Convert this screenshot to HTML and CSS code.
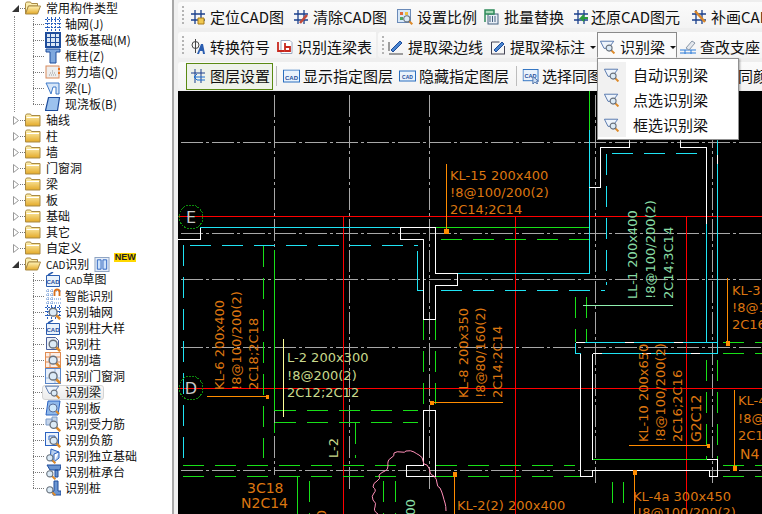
FILE: index.html
```html
<!DOCTYPE html>
<html lang="zh">
<head>
<meta charset="utf-8">
<title>CAD识别</title>
<link rel="stylesheet" href="styles.css">
</head>
<body>
<svg class="defs" width="0" height="0" aria-hidden="true">
  <defs>
    <linearGradient id="fold" x1="0" y1="0" x2="0" y2="1"><stop offset="0" stop-color="#fff4b8"/><stop offset="1" stop-color="#e3a928"/></linearGradient>
    <symbol id="folder" viewBox="0 0 16 14"><path d="M.5 2.500 1.500 1h4l1 1.500h8.500v10.500h-14.500z" fill="url(#fold)" stroke="#a98a44"/><path d="M1.500 4.500h12.500" stroke="#fff" fill="none"/></symbol>
    <symbol id="folder-open" viewBox="0 0 16 14"><path d="M.5 2.500 1.500 1h4l1 1.500h6v2.500h-9l-3 8z" fill="#fbeeb0" stroke="#a98a44"/><path d="M3.500 5h12l-3 8h-12z" fill="url(#fold)" stroke="#a98a44"/></symbol>
    <symbol id="mag" viewBox="0 0 16 16"><path d="M10 10 15 15" stroke="#dd8a2a" stroke-width="3"/><circle cx="7" cy="7" r="4.500" fill="#dcebf7" stroke="#68717c" stroke-width="1.600"/></symbol>
    <symbol id="hash" viewBox="0 0 16 16"><path d="M5 1v14M11 1v14M1 5h14M1 11h14" stroke="#1a3f8c" stroke-width="1.300" fill="none"/></symbol>
    <symbol id="grid" viewBox="0 0 16 16"><path d="M2.500 1v14M6.500 1v14M10.500 1v14M14.500 1v14M0 3.500h16M0 7.500h16M0 11.500h16" stroke="#2b62c0" stroke-dasharray="2 1" fill="none"/></symbol>
    <symbol id="cad" viewBox="0 0 16 16"><path d="M1.500 3.500h13v11h-13z" fill="#e9f2fb" stroke="#2a5db0"/><path d="M3 3 8 0" stroke="#2a5db0" stroke-width="1.500"/><text x="8" y="12" text-anchor="middle" class="cadtxt">CAD</text></symbol>
    <symbol id="beam" viewBox="0 0 18 18"><path d="M.5 2.500h15l-6 8-5 0z" fill="#eef4fb" stroke="#4a6ea8"/><use href="#mag" x="5" y="5" width="12" height="12"/></symbol>
    <symbol id="cadbox" viewBox="0 0 18 14"><rect x=".5" y=".5" width="16" height="12" fill="#eaf3fc" stroke="#2a6fc0"/><text x="8.500" y="10" text-anchor="middle" class="cadtxt">CAD</text></symbol>
  </defs>
</svg>

<div class="app">
  <aside class="sidebar">
    <div class="row"><svg class="exp" viewBox="0 0 9 9"><path d="M8 1v7H1z" fill="#333"/></svg><span class="hdash"></span><svg class="fold"><use href="#folder-open"/></svg><span class="t0">常用构件类型</span></div>
    <div class="kids">
      <div class="row"><span class="conn"></span><svg class="ic"><use href="#grid"/></svg><span class="t1">轴网(J)</span></div>
      <div class="row"><span class="conn"></span><svg class="ic" viewBox="0 0 16 16"><rect x="1" y="1" width="14" height="14" fill="#dbe7f6" stroke="#1f4d9c" stroke-width="2"/><path d="M1 5.500h14M1 10.500h14M5.500 1v14M10.500 1v14" stroke="#1f4d9c"/></svg><span class="t1">筏板基础(M)</span></div>
      <div class="row"><span class="conn"></span><svg class="ic" viewBox="0 0 16 16"><path d="M1 1h14v3h-4v11H5V4H1z" fill="#7fa8de" stroke="#1f4d9c"/></svg><span class="t1">框柱(Z)</span></div>
      <div class="row"><span class="conn"></span><svg class="ic" viewBox="0 0 16 16"><rect x="1" y="2" width="13" height="12" fill="#eee" stroke="#d98a5a"/><path d="M4 11h7M5 9h5M7 7h2" stroke="#999" stroke-dasharray="1 1"/><path d="M14 4v8" stroke="#e8701c" stroke-dasharray="2 2" stroke-width="2"/></svg><span class="t1">剪力墙(Q)</span></div>
      <div class="row"><span class="conn"></span><svg class="ic" viewBox="0 0 16 16"><path d="M1 3h13v11h-3V7H8l-2 7-4-9z" fill="#d6e6f8" stroke="#3d78c8"/></svg><span class="t1">梁(L)</span></div>
      <div class="row"><span class="conn last"></span><svg class="ic" viewBox="0 0 16 16"><path d="M3.500 1.500h11l-2 13h-12z" fill="#9cc2ee" stroke="#1f4d9c" stroke-width="1.200"/></svg><span class="t1">现浇板(B)</span></div>
    </div>
    <div class="row"><svg class="exp" viewBox="0 0 9 9"><path d="M2.500 .5 7.500 4.500 2.500 8.500z" fill="#fff" stroke="#999"/></svg><span class="hdash"></span><svg class="fold"><use href="#folder"/></svg><span class="t0">轴线</span></div>
    <div class="row"><svg class="exp" viewBox="0 0 9 9"><path d="M2.500 .5 7.500 4.500 2.500 8.500z" fill="#fff" stroke="#999"/></svg><span class="hdash"></span><svg class="fold"><use href="#folder"/></svg><span class="t0">柱</span></div>
    <div class="row"><svg class="exp" viewBox="0 0 9 9"><path d="M2.500 .5 7.500 4.500 2.500 8.500z" fill="#fff" stroke="#999"/></svg><span class="hdash"></span><svg class="fold"><use href="#folder"/></svg><span class="t0">墙</span></div>
    <div class="row"><svg class="exp" viewBox="0 0 9 9"><path d="M2.500 .5 7.500 4.500 2.500 8.500z" fill="#fff" stroke="#999"/></svg><span class="hdash"></span><svg class="fold"><use href="#folder"/></svg><span class="t0">门窗洞</span></div>
    <div class="row"><svg class="exp" viewBox="0 0 9 9"><path d="M2.500 .5 7.500 4.500 2.500 8.500z" fill="#fff" stroke="#999"/></svg><span class="hdash"></span><svg class="fold"><use href="#folder"/></svg><span class="t0">梁</span></div>
    <div class="row"><svg class="exp" viewBox="0 0 9 9"><path d="M2.500 .5 7.500 4.500 2.500 8.500z" fill="#fff" stroke="#999"/></svg><span class="hdash"></span><svg class="fold"><use href="#folder"/></svg><span class="t0">板</span></div>
    <div class="row"><svg class="exp" viewBox="0 0 9 9"><path d="M2.500 .5 7.500 4.500 2.500 8.500z" fill="#fff" stroke="#999"/></svg><span class="hdash"></span><svg class="fold"><use href="#folder"/></svg><span class="t0">基础</span></div>
    <div class="row"><svg class="exp" viewBox="0 0 9 9"><path d="M2.500 .5 7.500 4.500 2.500 8.500z" fill="#fff" stroke="#999"/></svg><span class="hdash"></span><svg class="fold"><use href="#folder"/></svg><span class="t0">其它</span></div>
    <div class="row"><svg class="exp" viewBox="0 0 9 9"><path d="M2.500 .5 7.500 4.500 2.500 8.500z" fill="#fff" stroke="#999"/></svg><span class="hdash"></span><svg class="fold"><use href="#folder"/></svg><span class="t0">自定义</span></div>
    <div class="row"><svg class="exp" viewBox="0 0 9 9"><path d="M8 1v7H1z" fill="#333"/></svg><span class="hdash"></span><svg class="fold"><use href="#folder-open"/></svg><span class="t0"><span class="lat">CAD</span>识别</span>
      <svg class="badge-ic" viewBox="0 0 16 16"><rect x=".5" y=".5" width="15" height="15" fill="#e6eef9" stroke="#8aa0c0"/><path d="M3 3h4v10H3zM9 3h4v10H9z" fill="#cfe3fa" stroke="#2b62c0"/></svg><span class="new">NEW</span></div>
    <div class="kids plain">
      <div class="row"><span class="conn"></span><svg class="ic"><use href="#cad"/></svg><span class="t1"><span class="lat tiny">CAD</span>草图</span></div>
      <div class="row"><span class="conn"></span><svg class="ic" viewBox="0 0 16 16"><path d="M1 3h16M1 7h7M1 11h16M1 15h16M3 1v15M7 1v15" stroke="#5a8ad0" stroke-dasharray="1 1" fill="none"/><path d="M9.500 8V4a2.500 2.500 0 0 1 5 0v4" stroke="#d8701c" stroke-width="1.800" fill="none"/></svg><span class="t1">智能识别</span></div>
      <div class="row"><span class="conn"></span><svg class="ic" viewBox="0 0 16 16"><use href="#grid" width="16" height="16"/><use href="#mag" x="2" y="2" width="14" height="14"/></svg><span class="t1">识别轴网</span></div>
      <div class="row"><span class="conn"></span><svg class="ic"><use href="#cad"/></svg><span class="t1">识别柱大样</span></div>
      <div class="row"><span class="conn"></span><svg class="ic" viewBox="0 0 16 16"><path d="M1.500 1.500h9l3 3v9h-12z" fill="#e9eff8" stroke="#4a5f9a"/><use href="#mag" x="2" y="2" width="14" height="14"/></svg><span class="t1">识别柱</span></div>
      <div class="row"><span class="conn"></span><svg class="ic" viewBox="0 0 16 16"><rect x=".5" y=".5" width="15" height="15" fill="#fbeee6" stroke="#e08a50"/><path d="M1 5h14M1 10h14M5 1v14" stroke="#e08a50"/><use href="#mag" x="2" y="2" width="14" height="14"/></svg><span class="t1">识别墙</span></div>
      <div class="row"><span class="conn"></span><svg class="ic" viewBox="0 0 16 16"><rect x=".5" y=".5" width="15" height="15" fill="#e8f0fb" stroke="#5a86c8"/><path d="M10 1v14M1 10h14" stroke="#9ab8e0"/><use href="#mag" x="2" y="2" width="14" height="14"/></svg><span class="t1">识别门窗洞</span></div>
      <div class="row"><span class="conn"></span><span class="hot"><svg class="ic"><use href="#beam"/></svg><span class="t1">识别梁</span></span></div>
      <div class="row"><span class="conn"></span><svg class="ic" viewBox="0 0 16 16"><path d="M3 1h12l-2 14H1z" fill="#8fb8ea" stroke="#2b62c0"/><circle cx="8" cy="8" r="4" fill="#cfe8fb" stroke="#5a6f9a"/><path d="M11 11l3 3" stroke="#dd8a2a" stroke-width="2"/></svg><span class="t1">识别板</span></div>
      <div class="row"><span class="conn"></span><svg class="ic" viewBox="0 0 16 16"><path d="M1 3h6v6H1zM7 1h5v6H7z" fill="#c4d4ea" stroke="#7a9ac8"/><use href="#mag" x="3" y="3" width="13" height="13"/></svg><span class="t1">识别受力筋</span></div>
      <div class="row"><span class="conn"></span><svg class="ic" viewBox="0 0 16 16"><rect x=".5" y=".5" width="13" height="13" fill="#eaf2fc" stroke="#2b62c0"/><path d="M4 8V4h6v4" stroke="#2b62c0" fill="none"/><use href="#mag" x="3" y="3" width="13" height="13"/></svg><span class="t1">识别负筋</span></div>
      <div class="row"><span class="conn"></span><svg class="ic" viewBox="0 0 16 16"><path d="M6 1l8 3v6l-5 4-4-2zM14 4 9 6v8" fill="#b8cfee" stroke="#2b62c0"/><use href="#mag" x="0" y="5" width="11" height="11"/></svg><span class="t1">识别独立基础</span></div>
      <div class="row"><span class="conn"></span><svg class="ic" viewBox="0 0 16 16"><path d="M2 1h14l-1 5H5zM10 6h3v7h-3z" fill="#6a94d0" stroke="#1f4d9c"/><use href="#mag" x="0" y="5" width="11" height="11"/></svg><span class="t1">识别桩承台</span></div>
      <div class="row"><span class="conn last"></span><svg class="ic" viewBox="0 0 16 16"><path d="M9 1h4v10h3v4H8v-4h1z" fill="#6a94d0" stroke="#1f4d9c"/><use href="#mag" x="0" y="5" width="11" height="11"/></svg><span class="t1">识别桩</span></div>
    </div>
  </aside>

  <main class="main">
    <div class="bands">
      <div class="band-row r1">
        <div class="band grow">
          <span class="grip"></span>
          <span class="tool w103"><svg class="ti" viewBox="0 0 16 16"><use href="#hash" width="16" height="16"/><path d="M8 15V9h6v6z" fill="#f0c850" stroke="#a87a18"/></svg>定位CAD图</span>
          <span class="tool w104"><svg class="ti" viewBox="0 0 16 16"><use href="#hash" width="16" height="16"/><path d="M7 14 14 6" stroke="#c24a3a" stroke-width="2.500"/></svg>清除CAD图</span>
          <span class="tool w87"><svg class="ti" viewBox="0 0 16 16"><rect x=".5" y=".5" width="13" height="13" fill="#d8e8f8" stroke="#6a8ab8"/><rect x="3" y="3" width="3" height="3" fill="#e06a3a"/><rect x="8" y="3" width="3" height="3" fill="#f0c040"/><rect x="3" y="8" width="3" height="3" fill="#50a860"/><use href="#mag" x="5" y="5" width="11" height="11"/></svg>设置比例</span>
          <span class="tool w89"><svg class="ti" viewBox="0 0 16 16"><rect x="4" y="5" width="10" height="10" fill="#e8eef6" stroke="#44607e"/><path d="M6 7v6M8.500 7v6M11 7v6" stroke="#44607e"/><path d="M1 1h9v4H1zM1 1v12" stroke="#2e8a5a" stroke-width="1.500" fill="#a8d8b8"/></svg>批量替换</span>
          <span class="tool w118 snug"><svg class="ti" viewBox="0 0 16 16"><use href="#hash" width="16" height="16"/><path d="M15 9H8l3-3M8 9l3 3" stroke="#2a9a3a" stroke-width="1.800" fill="none"/></svg>还原CAD图元</span>
          <span class="tool"><svg class="ti" viewBox="0 0 16 16"><use href="#hash" width="16" height="16"/><path d="M4 2 14 13" stroke="#d8862a" stroke-width="2.500"/></svg>补画CAD图元</span>
        </div>
      </div>
      <div class="band-row r2">
        <div class="band first">
          <span class="grip"></span>
          <span class="tool w87"><svg class="ti" viewBox="0 0 16 16"><circle cx="5.500" cy="6" r="3.500" fill="none" stroke="#444"/><path d="M5.500 0v14" stroke="#444"/><path d="M7 15 11 5h2l2 10h-2l-.5-3h-2.500l-1 3z" fill="#2a5db0"/></svg>转换符号</span>
          <span class="tool"><svg class="ti" viewBox="0 0 16 16"><path d="M4 1.500h9l2 2v11H4z" fill="#fff" stroke="#9aa8c0"/><path d="M1 3v9h6M8 4v8h5V8H8" stroke="#c8281e" stroke-width="1.800" fill="none"/></svg>识别连梁表</span>
        </div>
        <div class="band grow">
          <span class="grip second"></span>
          <span class="tool w102"><svg class="ti" viewBox="0 0 16 16"><path d="M1 15h14M1 12V3" stroke="#444" fill="none"/><path d="M3 11 12 2l2 2-9 9z" fill="#4a86d0" stroke="#1f4d9c"/></svg>提取梁边线</span>
          <span class="tool w107"><svg class="ti" viewBox="0 0 16 16"><path d="M1 15h14M1.500 15V3h8M14.500 7v8" stroke="#445" fill="none"/><path d="M4 11 12 3l2 2-8 8z" fill="#4a86d0" stroke="#1f4d9c"/></svg>提取梁标注<span class="drop"></span></span>
          <span class="tool btn-on"><svg class="ti" viewBox="0 0 18 18"><use href="#beam" width="18" height="18"/></svg>识别梁<span class="drop"></span></span>
          <span class="tool"><svg class="ti" viewBox="0 0 16 16"><path d="M0 11h16M0 14h16M5 11v4M11 11v4" stroke="#2a7ad8" fill="none"/><path d="M6 9l6-7 3 2-6 7z" fill="#e4e8ee" stroke="#8a98a8"/></svg>查改支座</span>
        </div>
      </div>
      <div class="band-row r3">
        <div class="band grow">
          <span class="tool pressed"><svg class="ti" viewBox="0 0 16 16"><path d="M5 1v14M11 1v14M1 5h14" stroke="#1a3f8c" fill="none"/><path d="M15 9H4l3-3M4 9l3 3M15 12H7" stroke="#1a6fd0" fill="none"/></svg>图层设置</span>
          <span class="sep"></span>
          <span class="tool w116"><svg class="ti ww" viewBox="0 0 18 14"><use href="#cadbox" width="18" height="14"/></svg>显示指定图层</span>
          <span class="tool w117"><svg class="ti ww" viewBox="0 0 18 14"><rect x=".5" y="1.500" width="16" height="10" fill="#eaf3fc" stroke="#2a6fc0"/><text x="8.500" y="9" text-anchor="middle" class="cadtxt small">CAD</text></svg>隐藏指定图层</span>
          <span class="sep tail"></span>
          <span class="tool w166"><svg class="ti ww" viewBox="0 0 18 16"><use href="#cadbox" width="18" height="14"/><path d="M11 8v8l2-2 3 2-1-3h2z" fill="#cfe2f6" stroke="#4a6ea8"/></svg>选择同图层CAD图元</span>
          <span class="tool"><svg class="ti ww" viewBox="0 0 18 16"><use href="#cadbox" width="18" height="14"/></svg>选择同颜色CAD图元</span>
        </div>
      </div>
    </div>

    <div class="menu">
      <div class="mi"><span class="gut"><svg class="ti" viewBox="0 0 18 18"><use href="#beam" width="18" height="18"/></svg></span><span class="ml">自动识别梁</span></div>
      <div class="mi"><span class="gut"><svg class="ti" viewBox="0 0 18 18"><use href="#beam" width="18" height="18"/></svg></span><span class="ml">点选识别梁</span></div>
      <div class="mi"><span class="gut"><svg class="ti" viewBox="0 0 18 18"><use href="#beam" width="18" height="18"/></svg></span><span class="ml">框选识别梁</span></div>
    </div>

    <svg class="draw" viewBox="178 91 584 423" width="584" height="423">
      <path class="gray" d="M181 142.500H762M181 233.500H762M181 279.500H762M181 347.500H762M181 470.500H762M274.500 95V475M349.500 95V490M429.500 95V490M595.500 95V483M712.500 95V483"/>
      <path class="red" d="M178 216.500H762M178 388.500H762M343.500 216.500V514M515.500 216.500V514M686.500 216.500V514"/>
      <path class="green" d="M589.500 91V130M435 227.500H589.500M274.500 250V410.500M274.500 422.500V433M297.500 477V514M592 459.500H707"/>
      <path class="green dash" d="M263.500 246V458M274.500 410.500H418M274.500 422.500H418M355.500 422.500V458M423.500 319V410M435.500 319V410M183 465.500H423M183 476.500H423M436 465.500H575M436 476.500H580M723 465.500H762M723 476.500H762M309.500 481V514M383.500 481V514M395.500 481V514M612.500 482V514M623.500 482V514M575.500 297V342M586.500 297V342M441 239.500H589M706.500 360V459M717.500 360V459M723 342.500H762M723 353.500H762"/>
      <path class="cyan" d="M200 227.500H400M589.500 130V273.500H458M417.500 251V290.500H423M575.500 342.500H717.500V353.500H592.500M575.500 342.500V353.500H581M706.500 224V342M717.500 140V342"/>
      <path class="cyan dash" d="M190 245.500H418M183.500 245V465M417.500 251V290M441 290.500H605M606.500 154V285M612 153.500H702"/>
      <path class="white" d="M178 239.500H200.500V227.500M400.500 227.500H435.500V273.500H457.500V285.500H435.500V319.500H423.500V239.500H400.500ZM423.500 410.500H435.500V476.500H406.500V465.500H423.500ZM629.500 139V147.500H600.500V187.500H589M680.500 139V147.500H706.500V224M580.500 353.500V476.500H592.500V470.500H709.500V476.500H717.500V459.500H707M592.500 353.500V459.500"/>
      <path class="white wd" d="M575.500 342.500H717.500M592.500 353.500H717.500M717.500 155V200"/>
      <path class="pink" d="M378 514q-5-3-3-7t-2-7q-2-4 1-7t-1-6q0-4 4-6t2-6q3-3 6-4t3-5q-1-6 3-8t3-5q3-2 7-1t5-1q5-1 8 1t5 3q4 2 4 6t4 4q3 4 3 7t4 4q3 3 3 7t3 5q2 4 3 8t2 7q1 3 1 8"/>
      <path class="orange" d="M446.500 164V233M207 396.500H269M430 402.500H503M454.500 472V514M634.500 470V514M629 445.500H710M734.500 390V470M727.500 278V345"/>
      <path class="orange wide" d="M444.500 229h4v4h-4zM733 466h3v4h-3zM266 395h2v3h-2zM430 401h3v3h-3zM453 472h3v4h-3zM633 470h3v4h-3zM707 444h2v3h-2zM726 341h3v4h-3z"/>
      <path class="pale" d="M283.500 339V417"/>
      <path class="mint" d="M583 305.500H673"/>

      <circle class="ring" cx="191" cy="217" r="12"/>
      <circle class="ring" cx="191" cy="388" r="12"/>
      <text class="axis" x="191" y="223">E</text>
      <text class="axis" x="191" y="394">D</text>

      <text class="ot" x="450" y="180">KL-15 200x400</text>
      <text class="ot" x="450" y="197">!8@100/200(2)</text>
      <text class="ot" x="450" y="214">2C14;2C14</text>

      <text class="ot" transform="translate(224 390) rotate(-90)">KL-6 200x400</text>
      <text class="ot" transform="translate(241 390) rotate(-90)">!8@100/200(2)</text>
      <text class="ot" transform="translate(258 390) rotate(-90)">2C18;2C18</text>

      <text class="pt" x="287" y="362">L-2 200x300</text>
      <text class="pt" x="287" y="380">!8@200(2)</text>
      <text class="pt" x="287" y="397">2C12;2C12</text>
      <text class="pt" transform="translate(338 458) rotate(-90)">L-2</text>

      <text class="ot big" x="247" y="493">3C18</text>
      <text class="ot big" x="241" y="508">N2C14</text>

      <text class="ot" transform="translate(468 398) rotate(-90)">KL-8 200x350</text>
      <text class="ot" transform="translate(485 398) rotate(-90)">!8@80/160(2)</text>
      <text class="ot" transform="translate(502 398) rotate(-90)">2C14;2C14</text>

      <text class="ot" x="457" y="510">KL-2(2) 200x400</text>
      <text class="ot" x="633" y="501">KL-4a 300x450</text>
      <text class="ot" x="637" y="517">!8@100/200(2)</text>

      <text class="ot" transform="translate(648 442) rotate(-90)">KL-10 200x650</text>
      <text class="ot" transform="translate(665 442) rotate(-90)">!8@100/200(2)</text>
      <text class="ot" transform="translate(682 442) rotate(-90)">2C16;2C16</text>
      <text class="ot big" transform="translate(701 442) rotate(-90)">G2C12</text>

      <text class="ot" x="738" y="405">KL-4</text>
      <text class="ot" x="738" y="423">!8@</text>
      <text class="ot" x="738" y="440">2C1</text>
      <text class="ot big" x="740" y="459">N4</text>

      <text class="ot" x="732" y="295">KL-3</text>
      <text class="ot" x="732" y="312">!8@1</text>
      <text class="ot" x="732" y="329">2C16</text>

      <text class="mt" transform="translate(637 299) rotate(-90)">LL-1 200x400</text>
      <text class="mt" transform="translate(655 299) rotate(-90)">!8@100/200(2)</text>
      <text class="mt" transform="translate(673 299) rotate(-90)">2C14;3C14</text>
      <text class="mt endt" transform="translate(415 499) rotate(-90)">LL-2 200x400</text>
      <text class="ot endt" transform="translate(326 510) rotate(-90)">KL-7 200x400</text>
    </svg>
  </main>
</div>
</body>
</html>
```

FILE: styles.css
```css
* { box-sizing: border-box; }
html, body { margin: 0; padding: 0; }
body {
  width: 762px;
  height: 514px;
  overflow: hidden;
  background: #fff;
  font-family: "Noto Sans CJK SC", "Liberation Sans", sans-serif;
  color: #111;
}
.defs { position: absolute; }
.cadtxt { font: bold 6px "Liberation Sans", sans-serif; fill: #1f4d9c; }
.cadtxt.small { font-size: 5px; }

.app { display: flex; width: 762px; height: 514px; }

/* tree */
.sidebar {
  width: 178px;
  flex: none;
  padding-right: 4px;
  background: #fff;
  border-right: 4px solid #f0f0f0;
  box-shadow: inset -2px 0 0 #a8a8a8;
  overflow: hidden;
  font-size: 12px;
  line-height: 16px;
}
.row { display: flex; align-items: center; height: 16px; white-space: nowrap; }
.exp { width: 9px; height: 9px; margin-left: 11px; flex: none; }
.hdash {
  width: 5px;
  height: 1px;
  background: repeating-linear-gradient(90deg, #777 0 1px, transparent 1px 2px);
}
.fold { width: 16px; height: 14px; flex: none; }
.t0 { margin-left: 5px; }
.t1 { margin-left: 4px; }
.lat { font-size: 10px; }
.lat.tiny { font-size: 9px; }
.kids {
  margin-left: 14px;
  padding-left: 18px;
  border-left: 1px dotted #888;
}
.kids.plain { border-left-color: transparent; }
.conn {
  width: 12px;
  height: 16px;
  flex: none;
  background:
    repeating-linear-gradient(90deg, #777 0 1px, transparent 1px 2px) left center / 100% 1px no-repeat,
    repeating-linear-gradient(0deg, #777 0 1px, transparent 1px 2px) left top / 1px 100% no-repeat;
}
.conn.last {
  background:
    repeating-linear-gradient(90deg, #777 0 1px, transparent 1px 2px) left center / 100% 1px no-repeat,
    repeating-linear-gradient(0deg, #777 0 1px, transparent 1px 2px) left top / 1px 50% no-repeat;
}
.ic { width: 16px; height: 16px; flex: none; }
.badge-ic { width: 16px; height: 15px; margin-left: 5px; flex: none; }
.new {
  margin: -13px 0 0 4px;
  width: 22px;
  height: 9px;
  text-align: center;
  background: #ffd800;
  font: bold 9px/9px "Liberation Sans", sans-serif;
  color: #222;
}
.hot {
  display: flex;
  align-items: center;
  height: 15px;
  margin-left: -3px;
  padding: 0 2px;
  border: 1px solid #d4d4d4;
  border-radius: 3px;
  background: linear-gradient(#f8f8f8, #ececec);
  white-space: nowrap;
}

/* main */
.main { flex: 1; min-width: 0; display: flex; flex-direction: column; position: relative; }
.bands {
  flex: none;
  height: 91px;
  padding-top: 2px;
  background: #eeeeee;
  display: flex;
  flex-direction: column;
  gap: 4px;
  font-size: 15px;
  line-height: 18px;
}
.band-row { display: flex; gap: 2px; height: 26px; white-space: nowrap; overflow: hidden; flex: none; }
.band-row.r3 { height: 28px; }
.r1 .band, .r2 .band { padding-top: 4px; }
.band {
  display: flex;
  align-items: center;
  height: 100%;
  background: linear-gradient(#fbfbfb, #f3f3f3);
  border-radius: 3px 0 0 3px;
}
.band.grow { flex: 1; min-width: 0; overflow: hidden; }
.band.first { width: 198px; flex: none; }
.grip {
  width: 2px;
  height: 18px;
  margin: -4px 6px 0 4px;
  flex: none;
  background: repeating-linear-gradient(#b4b4b4 0 2px, transparent 2px 4px);
}
.grip.second { margin-right: 4px; }
.tool { display: flex; align-items: center; flex: none; gap: 4px; }
.tool.snug { gap: 2px; }
.ti { width: 16px; height: 16px; flex: none; }
.ti.ww { width: 18px; height: 15px; margin-right: -2px; }
.w103 { width: 103px; }
.w104 { width: 104px; }
.w87 { width: 87px; }
.w89 { width: 89px; }
.w118 { width: 118px; }
.w102 { width: 102px; }
.w107 { width: 107px; }
.w116 { width: 116px; }
.w117 { width: 117px; }
.w166 { width: 166px; }
.drop {
  width: 0;
  height: 0;
  flex: none;
  margin-left: 1px;
  border: 3px solid transparent;
  border-top-color: #111;
  border-bottom-width: 0;
}
.btn-on {
  height: 26px;
  width: 80px;
  margin-top: -4px;
  padding-left: 2px;
  padding-top: 4px;
  margin-right: 3px;
  background: #fafafa;
  border: 1px solid #8a8a8a;
  border-bottom-color: #fafafa;
}
.pressed {
  height: 27px;
  width: 87px;
  margin-left: 8px;
  padding-left: 3px;
  background: #eef2ea;
  border: 1px solid #5a8a12;
}
.sep { width: 1px; height: 20px; margin: 0 6px 0 3px; background: #bdbdbd; flex: none; }
.sep.tail { margin: 0 5px 0 0; }

/* dropdown */
.menu {
  position: absolute;
  left: 419px;
  top: 58px;
  width: 142px;
  height: 82px;
  padding: 3px 0 2px;
  background: #fff;
  border: 1px solid #909090;
  box-shadow: 1px 1px 2px rgba(0, 0, 0, .35);
  font-size: 15px;
  display: flex;
  flex-direction: column;
  z-index: 2;
}
.mi { flex: 1; display: flex; align-items: center; }
.gut { width: 28px; align-self: stretch; background: #f1f1f1; display: flex; align-items: center; justify-content: center; flex: none; }
.ml { margin-left: 7px; }

/* drawing */
.draw { display: block; flex: none; background: #000; shape-rendering: crispEdges; }
.draw path { fill: none; }
.gray { stroke: #a8a8a8; stroke-dasharray: 22 3 3 3; }
.red { stroke: #ff0000; }
.green { stroke: #18e018; }
.cyan { stroke: #1fe4f4; }
.dash { stroke-dasharray: 21 11; }
.white { stroke: #fff; }
.white.wd { stroke-dasharray: 9 40; }
.pink { stroke: #ff8fb8; shape-rendering: auto; }
.orange { stroke: #ff8c00; }
.orange.wide { fill: #ff8c00; }
.pale { stroke: #ffff99; }
.mint { stroke: #90f0b0; }
.ring { fill: none; stroke: #0c8a0c; stroke-dasharray: 2 1; }
.draw text { font-family: "DejaVu Sans", sans-serif; font-size: 13px; shape-rendering: auto; }
.axis { fill: #c8c8c8; text-anchor: middle; font-size: 16px !important; }
.ot { fill: #dc7610; }
.ot.big { font-size: 14px; }
.pt { fill: #c8d98c; }
.mt { fill: #88dca4; }
.endt { text-anchor: end; }
```
